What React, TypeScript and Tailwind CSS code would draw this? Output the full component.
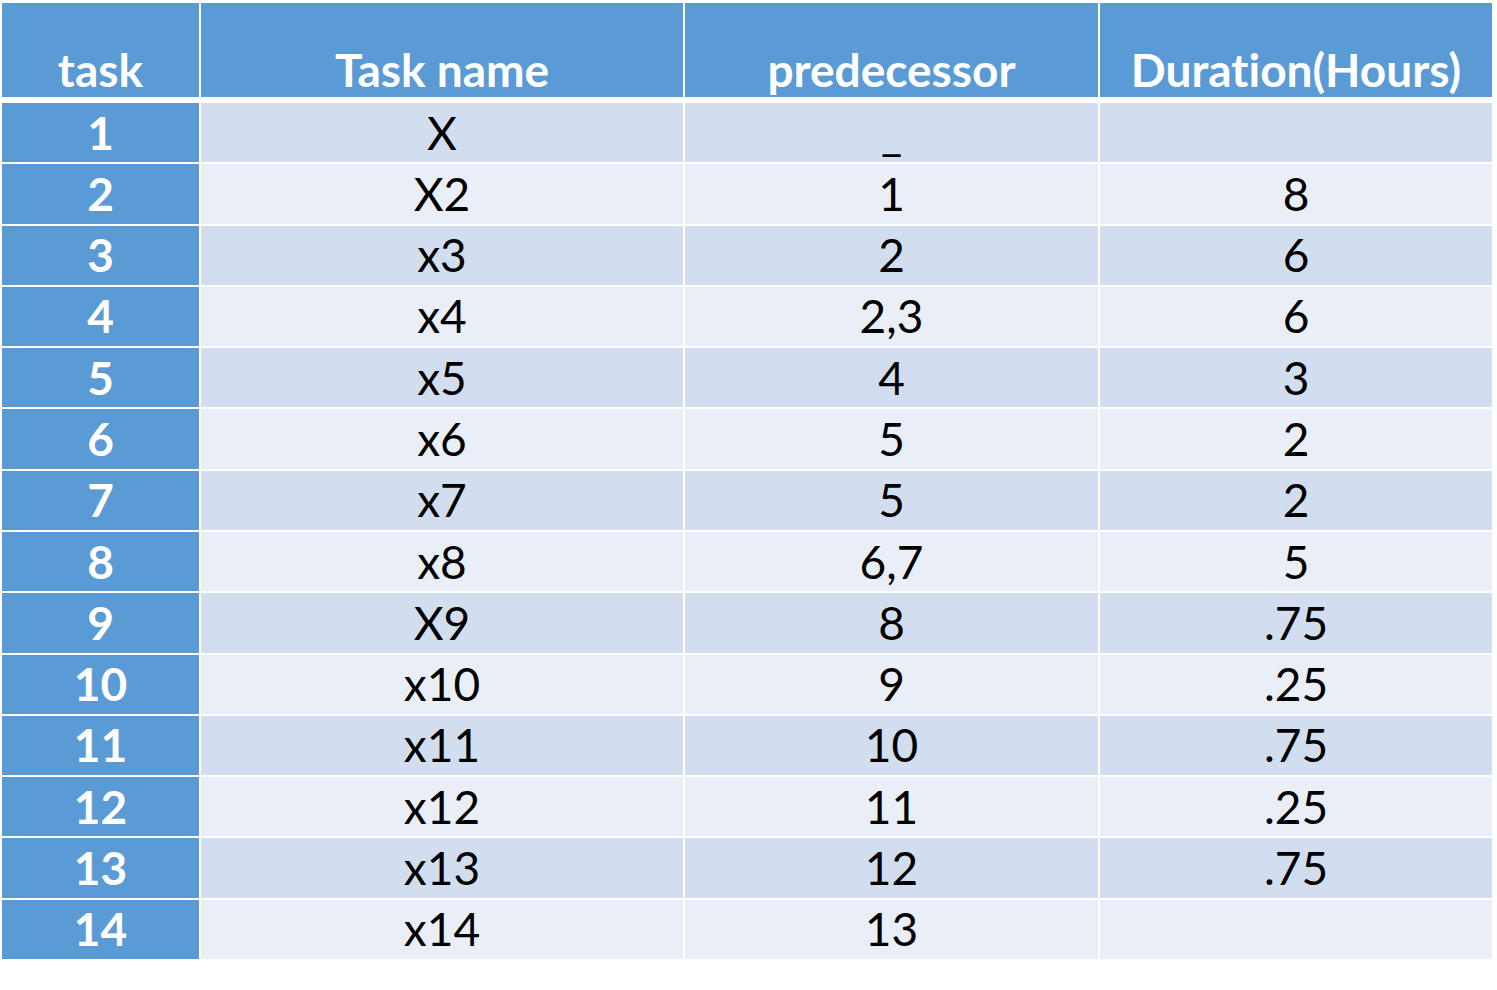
import React from 'react';

const rows: [string, string, string, string][] = [
  ['1', 'X', '_', ''],
  ['2', 'X2', '1', '8'],
  ['3', 'x3', '2', '6'],
  ['4', 'x4', '2,3', '6'],
  ['5', 'x5', '4', '3'],
  ['6', 'x6', '5', '2'],
  ['7', 'x7', '5', '2'],
  ['8', 'x8', '6,7', '5'],
  ['9', 'X9', '8', '.75'],
  ['10', 'x10', '9', '.25'],
  ['11', 'x11', '10', '.75'],
  ['12', 'x12', '11', '.25'],
  ['13', 'x13', '12', '.75'],
  ['14', 'x14', '13', ''],
];

const headers = ['task', 'Task name', 'predecessor', 'Duration(Hours)'];

const cols = 'grid grid-cols-[197px_482px_413px_392px] gap-x-[2px]';

export default function App() {
  return (
    <div className="min-h-screen bg-white pt-[3px] pl-[2px] font-['Lato','Open_Sans',sans-serif] [font-variant-ligatures:none]">
      <div className="w-[1490px]">
        <div className={`${cols} h-[94px]`}>
          {headers.map((h) => (
            <div
              key={h}
              className="bg-[#5b9bd5] flex items-end justify-center pb-[4px] text-white font-bold text-[46px] leading-none"
            >
              {h}
            </div>
          ))}
        </div>
        <div className={`${cols} grid-rows-14 gap-y-[2px] h-[856px] mt-[6px]`}>
          {rows.map((r, i) => {
            const bg = i % 2 === 0 ? 'bg-[#d2deef]' : 'bg-[#eaeff7]';
            return (
              <React.Fragment key={r[0]}>
                <div className="bg-[#5b9bd5] flex items-center justify-center text-white font-bold text-[46px] leading-none">
                  {r[0]}
                </div>
                {r.slice(1).map((c, j) => (
                  <div
                    key={j}
                    className={`${bg} flex items-center justify-center text-black text-[46px] leading-none`}
                  >
                    {c}
                  </div>
                ))}
              </React.Fragment>
            );
          })}
        </div>
      </div>
    </div>
  );
}
